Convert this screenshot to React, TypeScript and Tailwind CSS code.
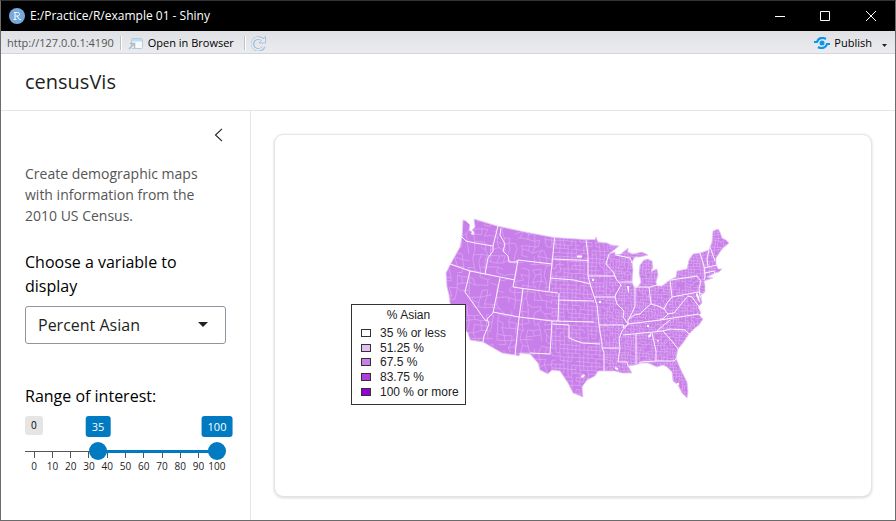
import { useState } from "react";

const OUTLINE =
  "M463 220L466 221L470 225L469 230L472 232L471 234L474 235L474 232L472 230L475 227L474 219L497 226L525 232L554 237.500L585 239.500L595 239.500L596 237L598 242L607 243L611 245L619 246L609 254L615 252L615 255L621 254L628 248L628 252L633 254L642 252L648 255L640 257L635 257L632 262L633 270L632 282L634 287L638 287L641 282L639 273L640 265L644 260L648 259L652 261L653 267L651 272L654 270L657 269L658 275L656 282L657 286L662 286L670 280L676 277L677 271L687 269L689 260L693 254L700 253L709 250L710 247L712 242L713 231L718 229L720 232L722 238L726 240L729 243L723 248L720 252L716 258L716 264L718 269L722 269L719 272L715 273L707 277L713 278L704 281L705 285L705 292L701 295L702 303L698 307L701 313L699 315L703 319L699 325L695 328L689 334L683 343L678 349L676 358L680 368L687 382L688 392L687 398L682 393L678 385L673 381L672 372L667 367L663 365L657 367L648 363L641 363L635 365L628 366L632 373L622 373L615 371L605 371L598 371L595 376L587 380L582 387L583 397L573 393L568 383L560 371L552 370L548 374L540 370L538 363L530 354L520 353L519 356L515 355L502 353L483 342L470 340L468 333L461 326L455 316L450 303L449 295L447 287L446 273L450 265L460 247L462 237Z";

const STATE_LINES = [
  "M462 237L466 241L475 243L493 246",
  "M498 226L493 246L493 251L488 258L485 274",
  "M501 228L500 235L505 244L503 251L508 256L509 262L517 262L517 260",
  "M450 264L470 271L485 274L515 280",
  "M470 271L465 292L485 320L487 321",
  "M518 260L552 264M518 260L513 287L523 288.500L558 293",
  "M554.500 238L552 264L549 291",
  "M500 278L493 313L487 319L489 324L484 336L483 342",
  "M523 289L519 318L515 355",
  "M493 312L519 317L552 321L594 322",
  "M559 293L558 321",
  "M552 321L550 354L530 353",
  "M553 324L569 325L569 338L582 343L600 344",
  "M553 259L589 260.500",
  "M550 278L574 280L582 282L590 284",
  "M559 300L594 301",
  "M586 240L588 256L588 276L591 287L597 305L599 325",
  "M588 276L615 276",
  "M609 254L606 264L614 273L616 279L621 285L616 294L615 297L594 297",
  "M616 255L630 258L632 263",
  "M620 282L633 282",
  "M615 297L617 304L624 311L623 317L628 324",
  "M635 287L635 306L632 313L628 320",
  "M635 287L650 287L657 285",
  "M649 287L651 304L646 308L640 314L634 315L628 320L628 324L622 331L619 339L620 348L618 362",
  "M599 325L624 325L623 328L628 324L660 320L699 314",
  "M599 325L602 344L602 348L604 352L604 371",
  "M602 348L619 348",
  "M618 362L627 362L628 366",
  "M623 335L663 331L670 329L685 330L689 334",
  "M636 334L636 364",
  "M652 333L656 351L656 361L640 362L640 364",
  "M656 361L674 361L677 358",
  "M663 331L671 340L678 349",
  "M657 331L665 324L670 320",
  "M670 280L672 297L667 303L664 309L668 314L674 313L682 303L687 297",
  "M651 304L658 306L664 309",
  "M671 280L697 276L701 281",
  "M672 297L698 292L702 294",
  "M687 296L692 297L697 304L700 307",
  "M668 314L664 318L660 320",
  "M700 253L704 266L705 276L704 280",
  "M709 250L707 258L708 267",
  "M710 247L715 261",
  "M704 268L717 265M705 273L714 271L715 274",
  "M701 281L699 289L700 296L702 300",
];

/** County borders: a jittered mesh, coarse in the west and dense in the east. */
function countyMesh(): string {
  let seed = 17;
  const rand = () => {
    seed = (seed * 16807) % 2147483647;
    return seed / 2147483647;
  };
  const bands = [
    { from: 444, to: 552, step: 6, jitter: 4, keep: 0.62 },
    { from: 552, to: 604, step: 4, jitter: 0.8, keep: 0.8 },
    { from: 604, to: 732, step: 3, jitter: 1.6, keep: 0.78 },
  ];
  let d = "";
  for (const { from, to, step, jitter, keep } of bands) {
    const cols = Math.ceil((to - from) / step) + 1;
    const rows = Math.ceil(186 / step) + 1;
    const pts = Array.from({ length: rows }, (_, r) =>
      Array.from({ length: cols }, (_, c) => [
        Math.min(to, from + c * step + (rand() - 0.5) * jitter).toFixed(1),
        (216 + r * step + (c * step) / 16 + (rand() - 0.5) * jitter).toFixed(1),
      ]),
    );
    for (let r = 0; r < rows - 1; r++) {
      for (let c = 0; c < cols - 1; c++) {
        if (rand() < keep) d += `M${pts[r][c]}L${pts[r][c + 1]}`;
        if (rand() < keep) d += `M${pts[r][c]}L${pts[r + 1][c]}`;
      }
    }
  }
  return d;
}

const COUNTIES = countyMesh();

function UsMap() {
  return (
    <svg viewBox="275 135 596 361" className="block w-full" role="img" aria-label="Map of US counties">
      <clipPath id="land">
        <path d={OUTLINE} />
      </clipPath>
      <path d={OUTLINE} fill="#c97fe9" stroke="#e7c8f5" strokeWidth="0.8" />
      <g clipPath="url(#land)" fill="none" strokeLinejoin="round">
        <path d={COUNTIES} stroke="#e3bdf4" strokeWidth="0.5" />
        <path d={STATE_LINES.join("")} stroke="#fcf6ff" strokeWidth="1" />
      </g>
      <g fill="#fff">
        <path d="M577 255.500h5v2h-5zM592 279h2v2h-2zM599 301h2v2h-2zM627 286h2v6h-1zM647 325h2v2h-2zM648 336l3-3v3l-2 2zM677 383h2v2h-2zM581 376l3-2 1 2-3 2zM657 340h1.500v1.500h-1.500zM615 367l3 1v2l-3-1z" />
        <path d="M697 292l2 5 1 6-2-3-2-5z" />
      </g>
    </svg>
  );
}

const LEGEND = [
  { label: "35 % or less", color: "bg-white" },
  { label: "51.25 %", color: "bg-[#e4bff4]" },
  { label: "67.5 %", color: "bg-[#c97fe9]" },
  { label: "83.75 %", color: "bg-[#ae3fde]" },
  { label: "100 % or more", color: "bg-[#9400d3]" },
];

function Legend() {
  return (
    <div className="absolute top-[169px] left-[76px] w-[115px] border border-[#333] bg-white pt-[3px] pb-[5px] font-['Liberation_Sans',Arial,sans-serif] text-[12px] leading-[14px] text-[#222]">
      <p className="mb-1 text-center">% Asian</p>
      <ul className="grid h-[73px] grid-rows-5">
        {LEGEND.map((item) => (
          <li key={item.label} className="flex items-center gap-[9px] pl-[9px] whitespace-nowrap">
            <span className={`h-2 w-[10px] shrink-0 border border-[#333] ${item.color}`} />
            {item.label}
          </li>
        ))}
      </ul>
    </div>
  );
}

const THUMB =
  "pointer-events-none absolute inset-x-0 top-0 h-[18px] w-full appearance-none bg-transparent [&::-webkit-slider-thumb]:pointer-events-auto [&::-webkit-slider-thumb]:size-[18px] [&::-webkit-slider-thumb]:appearance-none [&::-webkit-slider-thumb]:rounded-full [&::-webkit-slider-thumb]:bg-[#007bc2]";

const BUBBLE =
  "absolute top-0 -translate-x-1/2 rounded-[3px] bg-[#007bc2] px-[6px] text-[11px] leading-[21px] text-white";

function RangeSlider() {
  const [low, setLow] = useState(35);
  const [high, setHigh] = useState(100);
  return (
    <fieldset>
      <legend className="text-[16px] leading-6 text-black">Range of interest:</legend>
      <div className="relative mt-2 h-[26px]">
        <span className="inline-block rounded-[3px] bg-[#e5e5e5] px-[6px] align-top text-[10px] leading-[19px] text-black">0</span>
        <div className="absolute inset-x-[9px] top-0">
          <output className={BUBBLE} style={{ left: `${low}%` }}>{low}</output>
          <output className={BUBBLE} style={{ left: `${high}%` }}>{high}</output>
        </div>
      </div>
      <div className="relative h-[18px]">
        <div className="absolute inset-x-0 top-[9px] h-px bg-[#555]" />
        <div className="absolute inset-x-[9px] top-2 h-[3px]">
          <div className="absolute h-full bg-[#007bc2]" style={{ left: `${low}%`, right: `${100 - high}%` }} />
        </div>
        <input type="range" aria-label="Lowest value" min={0} max={100} value={low} onChange={(e) => setLow(Math.min(+e.target.value, high))} className={THUMB} />
        <input type="range" aria-label="Highest value" min={0} max={100} value={high} onChange={(e) => setHigh(Math.max(+e.target.value, low))} className={THUMB} />
      </div>
      <div className="-mt-2 grid grid-cols-11 text-[10px] leading-[14px] text-[#222]">
        {[0, 10, 20, 30, 40, 50, 60, 70, 80, 90, 100].map((n) => (
          <div key={n} className="flex flex-col items-center">
            <span className="mb-px h-[6px] w-px bg-[#555]" />
            <span>{n}</span>
          </div>
        ))}
      </div>
    </fieldset>
  );
}

function TitleBar() {
  return (
    <div className="flex h-[30px] items-center bg-black pl-2 text-white">
      <svg viewBox="0 0 16 16" className="size-4" aria-hidden="true">
        <circle cx="8" cy="8" r="8" fill="#75aadb" />
        <path d="M5 4.500h3.500c2.800 0 2.800 3.500 0 3.500H6.500M6 4.500v7M4.500 11.500h3M8 8l2.500 3.500H12" fill="none" stroke="#fff" strokeWidth="1" />
      </svg>
      <h1 className="ml-[5px] text-[12px]">E:/Practice/R/example 01 - Shiny</h1>
      <div className="ml-auto flex">
        <button aria-label="Minimize" className="flex w-[46px] justify-center">
          <svg viewBox="0 0 10 10" className="size-[10px]" stroke="#fff"><path d="M0 5.500h10" /></svg>
        </button>
        <button aria-label="Maximize" className="flex w-[44px] justify-center">
          <svg viewBox="0 0 10 10" className="size-[10px]" fill="none" stroke="#fff"><path d="M.5.5h9v9h-9z" /></svg>
        </button>
        <button aria-label="Close" className="flex w-[48px] justify-center">
          <svg viewBox="0 0 10 10" className="size-[10px]" stroke="#fff"><path d="M0 0l10 10M10 0L0 10" /></svg>
        </button>
      </div>
    </div>
  );
}

function Toolbar() {
  return (
    <div className="flex h-[23px] items-center border-b border-[#d3d5da] bg-linear-to-b from-[#dfe1e5] to-[#ebecef] pt-[2px] pl-[6px] text-[11px] text-black">
      <span className="text-[#555]">http://127.0.0.1:4190</span>
      <span className="ml-[6px] h-[14px] w-[2px] border-l border-[#bfc1c5] bg-white" />
      <button className="ml-[6px] flex items-center gap-[5px]">
        <svg viewBox="0 0 15 13" className="h-[13px] w-[15px]" aria-hidden="true">
          <rect x="3.500" y="1.500" width="11" height="10" rx="1" fill="#f8f9fa" stroke="#b9cad8" />
          <path d="M4 2h10v2.500H4z" fill="#b9def5" />
          <path d="M1 12l4.500-4.500M2 6.500h4.500V11" fill="none" stroke="#aebac4" strokeWidth="1.500" />
        </svg>
        Open in Browser
      </button>
      <span className="ml-[10px] h-[14px] w-[2px] border-l border-[#bfc1c5] bg-white" />
      <button aria-label="Refresh" className="ml-[5px]">
        <svg viewBox="0 0 15 15" className="size-[15px]" fill="none" aria-hidden="true">
          <path d="M12.500 4.500a6 6 0 1 0 .5 6" stroke="#a9bfd9" strokeWidth="3.500" />
          <path d="M14.500.5v6.500H8z" fill="#e4edf7" stroke="#a9bfd9" />
          <path d="M12 4.500a6 6 0 1 0 .7 5.500" stroke="#e4edf7" strokeWidth="1.600" />
        </svg>
      </button>
      <button className="ml-auto flex items-center gap-1">
        <svg viewBox="0 0 16 12" className="h-3 w-4" fill="none" aria-hidden="true">
          <circle cx="8" cy="6" r="2.500" fill="#0b96e8" />
          <path d="M0 5h3C4.500.5 9 .2 12 2" stroke="#0b96e8" strokeWidth="2.200" />
          <path d="M16 7h-3C11.500 11.500 7 11.800 4 10" stroke="#0b96e8" strokeWidth="2.200" />
        </svg>
        Publish
      </button>
      <button aria-label="Publish options" className="mr-2 ml-[10px] pt-1">
        <svg viewBox="0 0 5 3" className="block h-[3px] w-[5px]"><path d="M0 0h5L2.500 3z" fill="#222" /></svg>
      </button>
    </div>
  );
}

export default function App() {
  return (
    <div className="flex min-h-screen flex-col border border-[#6b6b6b] border-t-[#333] bg-white font-['Open_Sans','Noto_Sans',sans-serif] text-[#1d1f21]">
      <TitleBar />
      <Toolbar />
      <header className="border-b border-[#e5e5e5] px-6 pt-[13px] pb-[13px]">
        <h2 className="text-[20px] leading-[30px]">censusVis</h2>
      </header>
      <div className="flex grow">
        <aside className="w-[250px] shrink-0 border-r border-[#e5e5e5] px-6 pt-[17px]">
          <div className="flex justify-end">
            <button aria-label="Toggle sidebar">
              <svg viewBox="0 0 14 14" className="size-[14px]" fill="none" stroke="#222" strokeWidth="1.100"><path d="M10 .8L3.500 7l6.500 6.200" /></svg>
            </button>
          </div>
          <p className="mt-[21px] text-[14px] leading-[21px] text-[#555]">
            Create demographic maps with information from the 2010 US Census.
          </p>
          <label htmlFor="variable" className="mt-6 block text-[16px] leading-6 text-black">
            Choose a variable to display
          </label>
          <div className="relative mt-2">
            <select id="variable" className="h-[38px] w-full appearance-none rounded-[3px] border border-[#8d959e] bg-white pl-3 text-[16px]">
              <option>Percent Asian</option>
              <option>Percent White</option>
              <option>Percent Black</option>
              <option>Percent Hispanic</option>
            </select>
            <svg viewBox="0 0 10 5" className="pointer-events-none absolute top-4 right-[18px] h-[5px] w-[10px]"><path d="M0 0h10L5 5z" fill="#222" /></svg>
          </div>
          <div className="mt-10">
            <RangeSlider />
          </div>
        </aside>
        <main className="grow p-6">
          <section className="relative rounded-lg shadow-[0_0_1px_1px_#e5e5e5,0_1px_3px_1px_#d8d8d8]">
            <UsMap />
            <Legend />
          </section>
        </main>
      </div>
    </div>
  );
}
